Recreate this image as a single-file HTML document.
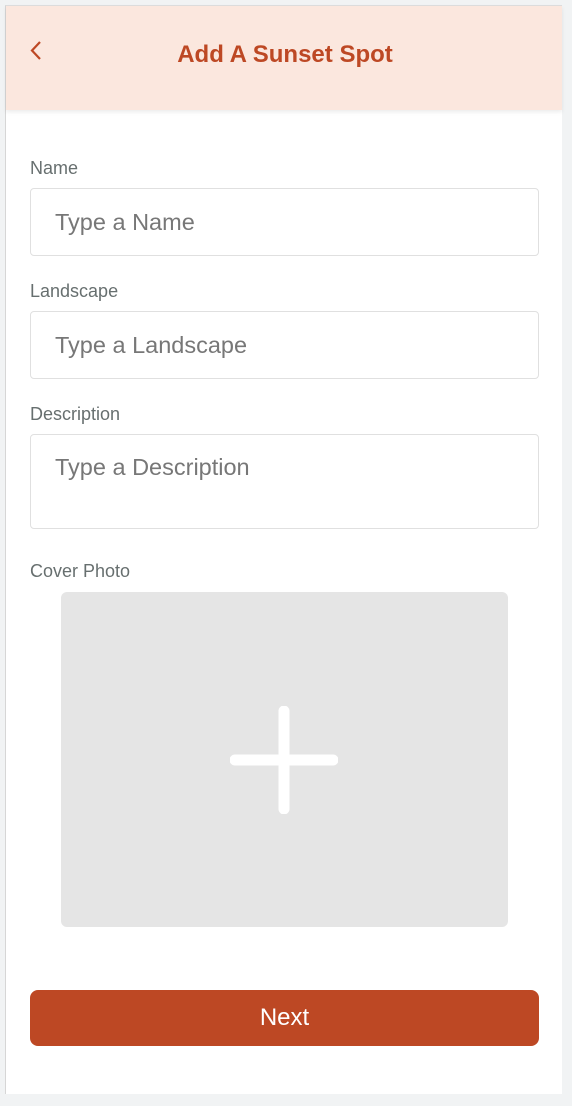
<!DOCTYPE html>
<html><head><style>
*{box-sizing:border-box;margin:0;padding:0}
body{width:572px;height:1106px;background:#f1f3f4;font-family:"Liberation Sans",sans-serif;position:relative;overflow:hidden}
.card{position:absolute;left:5px;top:5px;width:557px;height:1089px;background:#fff;border-left:1px solid #d6d6d6;border-top:1px solid #ddd}
.hdr{position:absolute;left:0;top:0;width:556px;height:104px;background:#fbe7de;box-shadow:0 2px 4px rgba(0,0,0,0.08)}
.title{position:absolute;left:0;right:0;top:35px;text-align:center;font-weight:bold;font-size:24px;color:#bd4824;padding-left:2px}
.lbl{position:absolute;left:24px;font-size:18px;color:#676f6f}
.in{position:absolute;left:24px;width:509px;border:1px solid #e0e0e0;border-radius:4px;font-size:23.5px;color:#777;padding-left:24px}
.photo{position:absolute;left:55px;top:586px;width:447px;height:335px;background:#e5e5e5;border-radius:6px}
.btn{position:absolute;left:24px;top:984px;width:509px;height:56px;background:#bd4824;border-radius:8px;color:#fff;font-size:24px;text-align:center;line-height:55px}
</style></head><body>
<div class="card">
<div class="hdr">
<svg style="position:absolute;left:22px;top:33px" width="16" height="24" viewBox="0 0 16 24"><path d="M12 3 L4 11.5 L12 20" fill="none" stroke="#bd4824" stroke-width="2.2"/></svg>
<div class="title">Add A Sunset Spot</div>
</div>
<div class="lbl" style="top:152px">Name</div>
<div class="in" style="top:182px;height:68px;line-height:66px">Type a Name</div>
<div class="lbl" style="top:275px">Landscape</div>
<div class="in" style="top:305px;height:68px;line-height:66px">Type a Landscape</div>
<div class="lbl" style="top:398px">Description</div>
<div class="in" style="top:428px;height:95px;padding-top:19px">Type a Description</div>
<div class="lbl" style="top:555px">Cover Photo</div>
<div class="photo">
<svg style="position:absolute;left:169px;top:114px" width="108" height="108" viewBox="0 0 108 108"><path d="M54 5 V103 M5 54 H103" stroke="#fff" stroke-width="11" stroke-linecap="round"/></svg>
</div>
<div class="btn">Next</div>
</div>
</body></html>
